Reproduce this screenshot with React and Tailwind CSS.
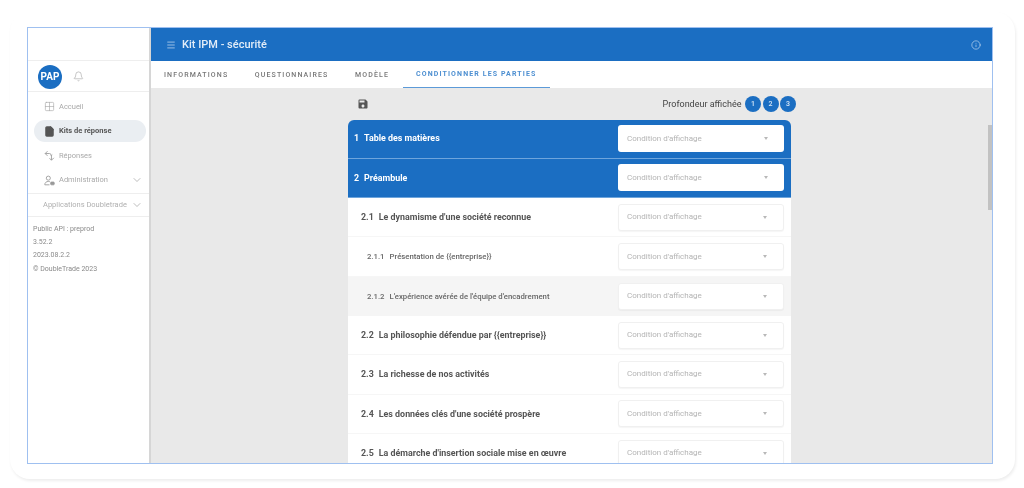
import React from 'react';
import { Menu, Info, Bell, Grid2x2, FileText, ChevronDown } from 'lucide-react';
import { MdSave } from 'react-icons/md';

const rows = [
  { num: '1', title: 'Table des matières', level: 0 },
  { num: '2', title: 'Préambule', level: 0 },
  { num: '2.1', title: "Le dynamisme d'une société reconnue", level: 1 },
  { num: '2.1.1', title: 'Présentation de {{entreprise}}', level: 2 },
  { num: '2.1.2', title: "L'expérience avérée de l'équipe d'encadrement", level: 2, hover: true },
  { num: '2.2', title: 'La philosophie défendue par {{entreprise}}', level: 1 },
  { num: '2.3', title: 'La richesse de nos activités', level: 1 },
  { num: '2.4', title: "Les données clés d'une société prospère", level: 1 },
  { num: '2.5', title: "La démarche d'insertion sociale mise en œuvre", level: 1 },
];

const tabs = ['INFORMATIONS', 'QUESTIONNAIRES', 'MODÈLE'];

// the two hooked arrows of the "Réponses" entry
function AnswersIcon({ className }) {
  return (
    <svg viewBox="0 0 14 14" fill="none" stroke="currentColor" strokeWidth="1.1" className={className}>
      <path d="M4.5 1.5 1.5 4.5l3 3" />
      <path d="M1.5 4.5H7a2 2 0 0 1 2 2v1" />
      <path d="M7 10.5l2.5 2.5 3-3" />
      <path d="M9.5 13V7.5a2 2 0 0 1 1-1.7" />
    </svg>
  );
}

// user outline with the small filled badge of "Administration"
function AdminIcon({ className }) {
  return (
    <svg viewBox="0 0 14 14" fill="none" stroke="currentColor" strokeWidth="1.1" className={className}>
      <circle cx="5.5" cy="4" r="2.6" />
      <path d="M1 12.5c0-2.8 2-4.3 4.5-4.3 1 0 1.7.2 2.3.5" />
      <path d="M1 12.5h6" />
      <rect x="8.5" y="9" width="4.5" height="3.5" rx="1" fill="currentColor" />
    </svg>
  );
}

function ConditionSelect({ strong }) {
  return (
    <div className={`flex h-[27px] w-[166px] shrink-0 items-center justify-between rounded-[3px] bg-white pr-[16px] text-[8px] text-[#b4b4b4] ${strong ? 'pl-[9px]' : 'border border-[#f0f0f0] pl-[8px] shadow-[0_1px_1px_rgba(0,0,0,0.04)]'}`}>
      <span>Condition d'affichage</span>
      <span className="h-0 w-0 border-x-[2.5px] border-t-[3px] border-x-transparent border-t-[#b8b8b8]" />
    </div>
  );
}

function Row({ row }) {
  const isTop = row.level === 0;
  const label = isTop
    ? 'pl-[6px] text-[8.9px] font-bold text-white'
    : row.level === 1
      ? 'pl-[13px] text-[8.9px] font-bold text-[#555]'
      : 'pl-[19px] text-[7.75px] font-medium text-[#666]';
  const bg = isTop
    ? 'bg-[#1b6ec2] border-b border-[#6ea5dc]'
    : row.hover
      ? 'bg-[#f5f5f5]'
      : 'bg-white border-b border-[#f6f6f6]';
  return (
    <div className={`flex h-[39.3px] shrink-0 items-center justify-between pr-[7px] ${bg}`}>
      <div className={`flex gap-[5px] pt-[1px] ${label}`}>
        <span>{row.num}</span>
        <span>{row.title}</span>
      </div>
      <ConditionSelect strong={isTop} />
    </div>
  );
}

function NavItem({ icon: Icon, label, active, chevron, thin }) {
  return (
    <div className={`flex h-[22px] items-center rounded-full pl-[10px] pr-[3px] text-[7.5px] ${active ? 'bg-[#eaeef2] font-bold text-[#555]' : 'text-[#a9a9a9]'}`}>
      {thin ? (
        <Icon className="mr-[4px] h-[11px] w-[11px] text-[#999]" />
      ) : (
        <Icon className="mr-[4px] h-[11px] w-[11px]" strokeWidth={active ? 2.4 : 1.4} fill={active ? '#555' : 'none'} />
      )}
      <span className="flex-1">{label}</span>
      {chevron && <ChevronDown className="h-[12px] w-[12px] text-[#999]" strokeWidth={1.3} />}
    </div>
  );
}

export default function App() {
  return (
    <div className="h-[488px] w-[1024px] overflow-hidden bg-white pl-[10px] pt-[12px] font-['Roboto',sans-serif]">
      <div className="h-[467px] w-[1005px] rounded-[20px] bg-white pl-[17px] pt-[15px] shadow-[1px_2px_3px_rgba(0,0,0,0.07)]">
        <div className="h-[437px] w-[966px] overflow-hidden border border-[#9fc0f0]">
          <div className="relative flex h-full w-full blur-[0.7px]">
            {/* sidebar */}
            <aside className="flex w-[123px] shrink-0 flex-col border-r-2 border-[#d6d6d6] bg-white">
              <div className="h-[33px] border-b border-[#eeeeee]" />
              <div className="flex h-[31px] items-center gap-[11px] border-b border-[#eeeeee] pl-[10px] pt-[1px]">
                <div className="flex h-[24px] w-[24px] items-center justify-center rounded-full bg-[#1b6ec2] text-[10px] font-bold text-white">PAP</div>
                <Bell className="h-[11px] w-[11px] text-[#999]" strokeWidth={1.2} />
              </div>
              <div className="flex flex-col gap-[2.5px] pl-[6px] pr-[3px] pt-[3.5px]">
                <NavItem icon={Grid2x2} label="Accueil" />
                <NavItem icon={FileText} label="Kits de réponse" active />
                <NavItem icon={AnswersIcon} label="Réponses" thin />
                <NavItem icon={AdminIcon} label="Administration" chevron thin />
              </div>
              <div className="mt-[2px] flex h-[24px] items-center justify-between border-y border-[#eeeeee] pl-[15px] pr-[6px] text-[7.5px] text-[#b0b0b0]">
                <span>Applications Doubletrade</span>
                <ChevronDown className="h-[12px] w-[12px] text-[#999]" strokeWidth={1.3} />
              </div>
              <div className="pl-[5px] pt-[5.5px] text-[7px] leading-[13.4px] text-[#8a8a8a]">
                <div>Public API : preprod</div>
                <div>3.52.2</div>
                <div>2023.08.2.2</div>
                <div>© DoubleTrade 2023</div>
              </div>
            </aside>

            {/* main */}
            <main className="flex min-w-0 flex-1 flex-col bg-[#e9e9e9]">
              <header className="flex h-[33px] shrink-0 items-center justify-between bg-[#1b6ec2] pl-[15px] pr-[11px] text-white">
                <div className="flex items-center gap-[6px] pt-[1px] text-[11px] font-medium text-[#e3edf8]">
                  <Menu className="h-[10px] w-[10px]" strokeWidth={1.5} />
                  <span>Kit IPM - sécurité</span>
                </div>
                <Info className="h-[10px] w-[10px] text-[#cfe0f3]" strokeWidth={1.5} />
              </header>

              <nav className="flex h-[27px] shrink-0 items-stretch bg-white pl-[13px] pt-[1px] text-[7px] font-medium tracking-[1.13px] text-[#777]">
                {tabs.map((tab) => (
                  <div key={tab} className="flex items-center pr-[26.5px]">{tab}</div>
                ))}
                <div className="ml-[-12.5px] flex items-center border-b border-[#5c9ad8] px-[13px] font-bold text-[#4d8fd1]">CONDITIONNER LES PARTIES</div>
              </nav>

              <div className="flex min-h-0 flex-1 flex-col overflow-hidden pl-[197px]">
                <div className="flex h-[31.5px] w-[448px] shrink-0 items-center justify-between pl-[9px] pt-[1px]">
                  <MdSave className="h-[12px] w-[12px] text-[#555]" />
                  <div className="flex items-center gap-[1.5px] text-[9px] text-[#444]">
                    <span className="mr-[2px]">Profondeur affichée</span>
                    {[1, 2, 3].map((n) => (
                      <span key={n} className="flex h-[16px] w-[16px] items-center justify-center rounded-full bg-[#1b6ec2] text-[7px] font-medium text-[#d7e6f6]">{n}</span>
                    ))}
                  </div>
                </div>
                <div className="flex w-[443px] flex-col overflow-hidden rounded-t-[6px]">
                  {rows.map((row) => (
                    <Row key={row.num} row={row} />
                  ))}
                </div>
              </div>
            </main>

            {/* scrollbar thumb */}
            <div className="absolute right-0 top-[97px] h-[85px] w-[4px] bg-[#c2c2c2]" />
          </div>
        </div>
      </div>
    </div>
  );
}
